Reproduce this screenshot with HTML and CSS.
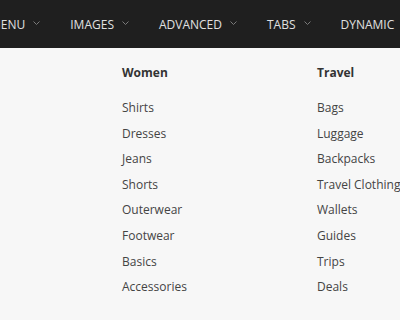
FILE: index.html
```html
<!doctype html>
<html>
<head>
  <meta charset="utf-8">
  <title>Mega menu</title>
  <link rel="stylesheet" href="styles.css">
</head>
<body>
  <nav class="topbar">
    <ul class="nav">
      <li class="nav-item">Menu <svg class="caret" viewBox="0 0 7 4"><polyline points="0.5,0.5 3.5,3.5 6.5,0.5"/></svg></li>
      <li class="nav-item">Images <svg class="caret" viewBox="0 0 7 4"><polyline points="0.5,0.5 3.5,3.5 6.5,0.5"/></svg></li>
      <li class="nav-item">Advanced <svg class="caret" viewBox="0 0 7 4"><polyline points="0.5,0.5 3.5,3.5 6.5,0.5"/></svg></li>
      <li class="nav-item">Tabs <svg class="caret" viewBox="0 0 7 4"><polyline points="0.5,0.5 3.5,3.5 6.5,0.5"/></svg></li>
      <li class="nav-item">Dynamic</li>
    </ul>
  </nav>

  <div class="dropdown">
    <div class="col">
      <h4>Women</h4>
      <ul>
        <li>Shirts</li>
        <li>Dresses</li>
        <li>Jeans</li>
        <li>Shorts</li>
        <li>Outerwear</li>
        <li>Footwear</li>
        <li>Basics</li>
        <li>Accessories</li>
      </ul>
    </div>
    <div class="col">
      <h4>Travel</h4>
      <ul>
        <li>Bags</li>
        <li>Luggage</li>
        <li>Backpacks</li>
        <li>Travel Clothing</li>
        <li>Wallets</li>
        <li>Guides</li>
        <li>Trips</li>
        <li>Deals</li>
      </ul>
    </div>
  </div>
</body>
</html>
```

FILE: styles.css
```css
* {
  box-sizing: border-box;
}
html, body {
  margin: 0;
  height: 100%;
  overflow: hidden;
}
body {
  background-color: #f7f7f7;
  font-family: "Open Sans", "Liberation Sans", sans-serif;
  font-size: 12px;
  color: #444;
}
ul { list-style: none; margin: 0; padding: 0; }

.topbar {
  background-color: #1f1f1f;
  height: 48px;
  overflow: hidden;
}
.nav {
  display: flex;
  align-items: center;
  height: 48px;
  margin-left: -25px;
  white-space: nowrap;
}
.nav-item {
  display: flex;
  align-items: center;
  gap: 8px;
  padding: 0 15px;
  color: #e0e0e0;
  text-transform: uppercase;
  font-size: 12px;
}
.caret {
  width: 7px;
  height: 4px;
  margin-top: -3px;
  fill: none;
  stroke: #7a7a7a;
  stroke-width: 1;
}

.dropdown {
  display: grid;
  grid-template-columns: 195px 195px;
  padding: 15px 0 0 122px;
  white-space: nowrap;
}
.col h4 {
  margin: 0 0 12px;
  font-size: 12px;
  font-weight: 700;
  color: #333;
  line-height: 20px;
}
.col li {
  line-height: 25.6px;
  color: #444;
}
```
